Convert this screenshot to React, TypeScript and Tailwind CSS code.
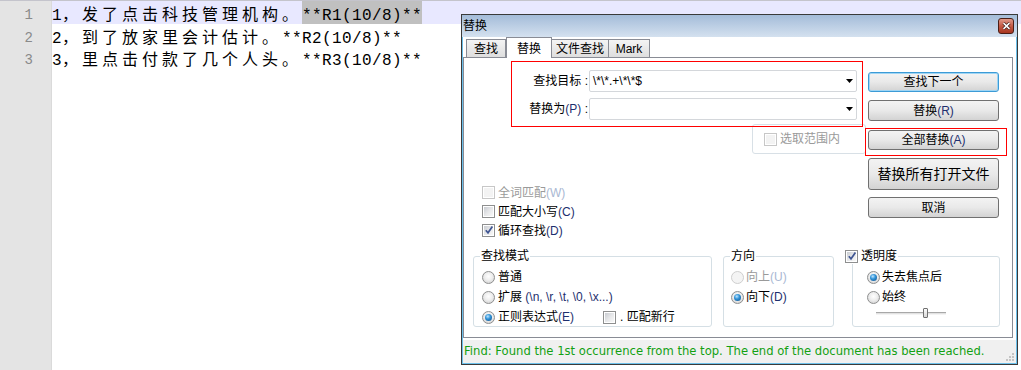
import React from "react";

const UI = "font-['Liberation_Sans','Noto_Sans_CJK_SC',sans-serif]";

function Cjk({ children }: { children: React.ReactNode }) {
  return <span className="text-[16px] leading-[18px] tracking-[4px] font-['Noto_Sans_CJK_SC',sans-serif]">{children}</span>;
}
function Asc({ children }: { children: React.ReactNode }) {
  return <span className="text-[16px] leading-[18px] tracking-[0.4px] font-['Liberation_Mono',monospace]">{children}</span>;
}

function Check({ checked, disabled }: { checked?: boolean; disabled?: boolean }) {
  return (
    <span
      className={
        "relative w-[13px] h-[13px] border p-[1px] shrink-0 flex bg-white " +
        (disabled ? "border-[#c7c7c7]" : "border-[#8e8f8f]")
      }
    >
      <span
        className={
          "flex-1 " + (disabled ? "bg-[#f3f3f3]" : "bg-linear-to-br from-[#c9ccd1] via-[#e6e7e9] to-[#f8f8f8]")
        }
      />
      {checked && (
        <svg className="absolute left-[1px] top-[0px]" width="10" height="10" viewBox="0 0 10 10">
          <path d="M1.8 5.2 L4 7.8 L8.4 1.6" fill="none" stroke="#3f5592" strokeWidth="1.7" />
        </svg>
      )}
    </span>
  );
}

function Radio({ checked, disabled }: { checked?: boolean; disabled?: boolean }) {
  return (
    <span
      className={
        "w-[13px] h-[13px] rounded-full border shrink-0 flex items-center justify-center " +
        (disabled
          ? "border-[#cfcfcf] bg-[#f4f4f4]"
          : "border-[#8e8f8f] bg-[radial-gradient(circle_at_50%_40%,#ffffff_0%,#eeeeee_45%,#c9c9c9_100%)]")
      }
    >
      {checked && (
        <span className="w-[7px] h-[7px] rounded-full bg-[radial-gradient(circle_at_40%_35%,#bfe6ff_0%,#3294d8_40%,#0e4a85_100%)]" />
      )}
    </span>
  );
}

function Btn({ children, h, focus }: { children: React.ReactNode; h: string; focus?: boolean }) {
  return (
    <div
      className={
        "w-[131px] rounded-[3px] border flex items-center justify-center text-[12px] text-black bg-linear-to-b from-[#f3f3f3] via-[#e9e9e9] to-[#d3d3d3] " +
        h +
        (focus ? " border-[#3c9bd6] shadow-[inset_0_0_0_1px_#9fd5f4]" : " border-[#707070]")
      }
    >
      {children}
    </div>
  );
}

function Key({ children, dim }: { children: React.ReactNode; dim?: boolean }) {
  return <span className={dim ? "text-[#a9b8d3]" : "text-[#1d2f6e]"}>{children}</span>;
}

function Combo({ value }: { value?: string }) {
  return (
    <div className="ml-[1px] w-[268px] h-[22px] rounded-[2px] border border-[#d4d7db] bg-white flex items-center pl-[3px] pr-[3px]">
      <span className="flex-1 text-[12px] font-['Liberation_Sans',sans-serif]">{value}</span>
      <svg width="7" height="4" viewBox="0 0 7 4">
        <path d="M0 0H7L3.5 4Z" fill="#000" />
      </svg>
    </div>
  );
}

function Dialog() {
  return (
    <div className={"absolute left-[461px] top-[13px] w-[557px] h-[351px] border border-[#3a3a3a] bg-white flex flex-col text-[12px] text-black " + UI}>
      <div className="h-[22px] shrink-0 bg-linear-to-b from-[#a4bcd9] to-[#d4e1ef] flex items-center justify-between pl-[1px] pr-[3px]">
        <span className="text-[12px] leading-[16px]">替换</span>
        <span className="w-[16px] h-[16px] rounded-[3px] border border-[#4b1e16] bg-linear-to-b from-[#e09a8a] via-[#c45a45] to-[#a8361f] flex items-center justify-center">
          <svg width="9" height="8" viewBox="0 0 9 8">
            <path d="M1.5 1.2L7.5 6.8M7.5 1.2L1.5 6.8" stroke="#3a1a14" strokeWidth="3" />
            <path d="M1.5 1.2L7.5 6.8M7.5 1.2L1.5 6.8" stroke="#ffffff" strokeWidth="1.6" />
          </svg>
        </span>
      </div>
      <div className="flex-1 flex flex-col border-x border-b border-[#6cc0ea]">
        {/* tabs */}
        <div className="h-[20px] shrink-0 flex items-end pl-[3px]">
          <div className="w-[40px] h-[18px] border border-b-0 border-[#898c95] bg-linear-to-b from-[#f4f4f4] to-[#dedede] flex items-center justify-center">查找</div>
          <div className="relative z-10 ml-[0px] mb-[-1px] w-[46px] h-[21px] border border-b-0 border-[#898c95] bg-white flex items-start pt-[2px] justify-center">替换</div>
          <div className="w-[57px] h-[18px] border border-b-0 border-l-0 border-[#898c95] bg-linear-to-b from-[#f4f4f4] to-[#dedede] flex items-center justify-center">文件查找</div>
          <div className="w-[41px] h-[18px] border border-b-0 border-l-0 border-[#898c95] bg-linear-to-b from-[#f4f4f4] to-[#dedede] flex items-center justify-center">Mark</div>
        </div>
        {/* panel */}
        <div className="w-[550px] h-[281px] shrink-0 border border-[#898c95] bg-white flex flex-col">
          <div className="flex items-start h-[182px] shrink-0">
            <div className="w-[404px] shrink-0 flex flex-col">
              <div className="ml-[47px] mt-[3px] w-[352px] h-[66px] border border-[#ff0000] flex flex-col relative z-10">
                <div className="mt-[8px] flex items-center h-[22px]">
                  <span className="w-[76px] text-right">查找目标 :</span>
                  <Combo value="\*\*.+\*\*$" />
                </div>
                <div className="mt-[6px] flex items-center h-[22px]">
                  <span className="w-[76px] text-right">
                    替换为<Key>(P)</Key> :
                  </span>
                  <Combo />
                </div>
              </div>
              <div className="ml-[288px] mt-[-3px] w-[114px] h-[30px] border border-[#d8e0e6] rounded-[3px] flex items-center pl-[11px] gap-[3px] text-[#9a9a9a]">
                <Check disabled />
                <span>选取范围内</span>
              </div>
              <div className="mt-[29px] pl-[18px] flex flex-col">
                <div className="h-[19px] flex items-center gap-[3px] text-[#9a9a9a]">
                  <Check disabled />
                  <span>
                    全词匹配<Key dim>(W)</Key>
                  </span>
                </div>
                <div className="h-[19px] flex items-center gap-[3px]">
                  <Check />
                  <span>
                    匹配大小写<Key>(C)</Key>
                  </span>
                </div>
                <div className="h-[19px] flex items-center gap-[3px]">
                  <Check checked />
                  <span>
                    循环查找<Key>(D)</Key>
                  </span>
                </div>
              </div>
            </div>
            <div className="mt-[14px] flex flex-col">
              <Btn h="h-[20px]" focus>
                查找下一个
              </Btn>
              <div className="mt-[8px]">
                <Btn h="h-[21px]">
                  替换<Key>(R)</Key>
                </Btn>
              </div>
              <div className="mt-[9px] relative">
                <Btn h="h-[20px]">
                  全部替换<Key>(A)</Key>
                </Btn>
                <div className="absolute left-[-3px] top-[-2px] w-[142px] h-[28px] border border-[#ff0000]" />
              </div>
              <div className="mt-[8px]">
                <Btn h="h-[32px]">
                  <span className="text-[14px]">替换所有打开文件</span>
                </Btn>
              </div>
              <div className="mt-[7px]">
                <Btn h="h-[21px]">取消</Btn>
              </div>
            </div>
          </div>
          {/* groups */}
          <div className="mt-[8px] flex items-start">
            <fieldset className="ml-[9px] w-[239px] h-[79px] min-w-0 border border-[#d5dfe5] rounded-[3px]">
              <legend className="ml-[6px] px-[1px] leading-[16px]">查找模式</legend>
              <div className="mt-[3px] pl-[8px] flex flex-col">
                <div className="h-[20px] flex items-center gap-[3px]">
                  <Radio />
                  <span>普通</span>
                </div>
                <div className="h-[20px] flex items-center gap-[3px]">
                  <Radio />
                  <span>
                    扩展 <Key>(\n, \r, \t, \0, \x...)</Key>
                  </span>
                </div>
                <div className="h-[20px] flex items-center">
                  <div className="w-[121px] flex items-center gap-[3px]">
                    <Radio checked />
                    <span>
                      正则表达式<Key>(E)</Key>
                    </span>
                  </div>
                  <Check />
                  <span className="ml-[4px]">. 匹配新行</span>
                </div>
              </div>
            </fieldset>
            <fieldset className="ml-[11px] w-[111px] h-[79px] min-w-0 border border-[#d5dfe5] rounded-[3px]">
              <legend className="ml-[6px] px-[1px] leading-[16px]">方向</legend>
              <div className="mt-[3px] pl-[7px] flex flex-col">
                <div className="h-[20px] flex items-center gap-[2px] text-[#9a9a9a]">
                  <Radio disabled />
                  <span>
                    向上<Key dim>(U)</Key>
                  </span>
                </div>
                <div className="h-[20px] flex items-center gap-[2px]">
                  <Radio checked />
                  <span>
                    向下<Key>(D)</Key>
                  </span>
                </div>
              </div>
            </fieldset>
            <fieldset className="ml-[18px] w-[148px] h-[79px] min-w-0 border border-[#d5dfe5] rounded-[3px]">
              <legend className="ml-[-8px] pr-[1px] leading-[16px] flex items-center gap-[3px] bg-white">
                <Check checked />
                <span>透明度</span>
              </legend>
              <div className="mt-[3px] pl-[14px] flex flex-col">
                <div className="h-[20px] flex items-center gap-[2px]">
                  <Radio checked />
                  <span>失去焦点后</span>
                </div>
                <div className="h-[20px] flex items-center gap-[2px]">
                  <Radio />
                  <span>始终</span>
                </div>
                <div className="ml-[9px] relative w-[70px] h-[12px] flex items-center">
                  <div className="w-full h-[3px] border-t border-[#a8a8a8] border-b border-b-[#f4f4f4] bg-[#e2e2e2]" />
                  <span className="absolute left-[47px] top-[1px] w-[5px] h-[10px] border border-[#707070] rounded-[1px] bg-linear-to-b from-[#fbfbfb] to-[#d8d8d8]" />
                </div>
              </div>
            </fieldset>
          </div>
        </div>
        <div className="h-[2px] shrink-0" />
        {/* status */}
        <div className="relative h-[23px] shrink-0 bg-[#f0f0f0] flex items-center pl-[1px]">
          <span className="text-[11.6px] text-[#12a012] font-['DejaVu_Sans',sans-serif]">
            Find: Found the 1st occurrence from the top. The end of the document has been reached.
          </span>
          <svg className="absolute right-[1px] bottom-[1px]" width="10" height="10" viewBox="0 0 10 10">
            <rect x="7" y="1" width="2" height="2" fill="#c4c4c4" />
            <rect x="4" y="4" width="2" height="2" fill="#c4c4c4" />
            <rect x="7" y="4" width="2" height="2" fill="#c4c4c4" />
            <rect x="1" y="7" width="2" height="2" fill="#c4c4c4" />
            <rect x="4" y="7" width="2" height="2" fill="#c4c4c4" />
            <rect x="7" y="7" width="2" height="2" fill="#c4c4c4" />
          </svg>
        </div>
      </div>
    </div>
  );
}

export default function App() {
  return (
    <div className="relative w-[1021px] h-[370px] overflow-hidden bg-white border-t border-[#c4c4cc]">
      <div className="flex h-full">
        <div className="w-[52px] shrink-0 bg-[#e4e4e4] border-r border-[#dadada] flex flex-col">
          {[
            [1, "h-[23px]"],
            [2, "h-[22px]"],
            [3, "h-[22px]"],
          ].map(([n, h]) => (
            <div key={n as number} className={"pt-[6px] leading-[16px] text-right pr-[18px] text-[14px] text-[#8a8a8a] font-['Liberation_Mono',monospace] " + h}>
              {n}
            </div>
          ))}
        </div>
        <div className="flex-1 flex flex-col text-black">
          <div className="h-[23px] flex items-baseline bg-[#e8e8ff] whitespace-pre">
            <Asc>1</Asc>
            <Cjk>，发了点击科技管理机构。</Cjk>
            <span className="bg-[#c0c0c0] pt-[8px] text-[16px] leading-[15px] tracking-[0.4px] font-['Liberation_Mono',monospace]">
              **R1(10/8)**
            </span>
          </div>
          <div className="h-[22px] pt-[3px] flex items-baseline whitespace-pre">
            <Asc>2</Asc>
            <Cjk>，到了放家里会计估计。</Cjk>
            <Asc>**R2(10/8)**</Asc>
          </div>
          <div className="h-[22px] pt-[3px] flex items-baseline whitespace-pre">
            <Asc>3</Asc>
            <Cjk>，里点击付款了几个人头。</Cjk>
            <Asc>**R3(10/8)**</Asc>
          </div>
        </div>
      </div>
      <Dialog />
    </div>
  );
}
